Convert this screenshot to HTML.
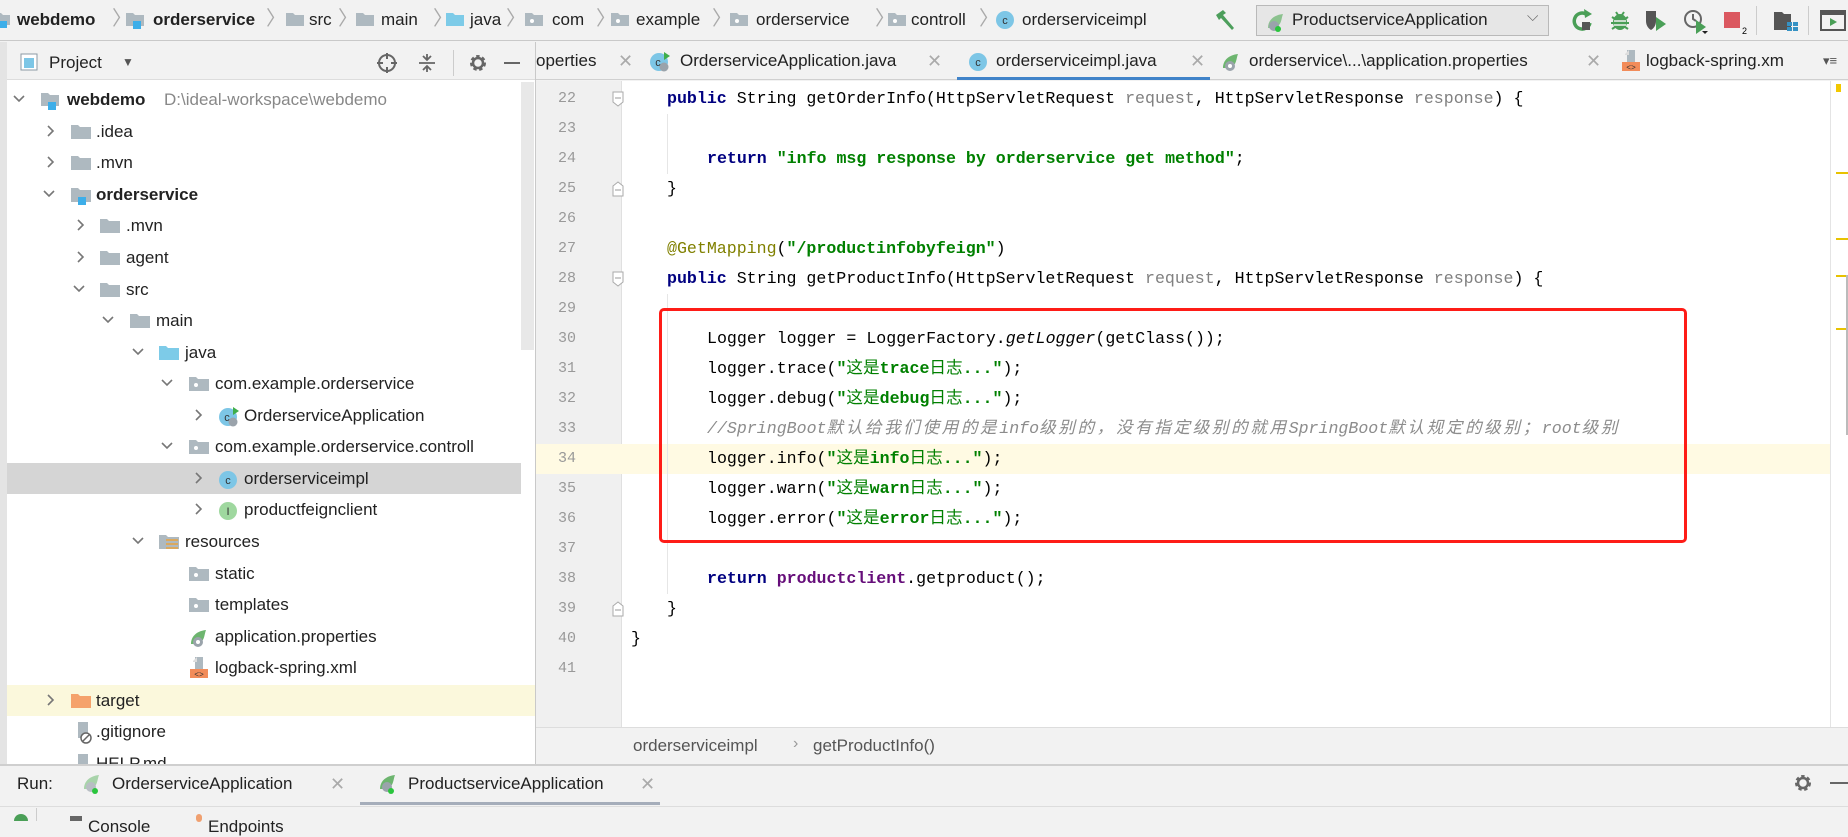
<!DOCTYPE html>
<html><head><meta charset="utf-8">
<style>
*{margin:0;padding:0;box-sizing:border-box}
body{width:1848px;height:821px;overflow:hidden;background:#f2f2f2;font-family:"Liberation Sans","Noto Sans CJK SC",sans-serif;color:#222;position:relative}
.a{position:absolute;white-space:nowrap}
.t17{font-size:17px}
.r{position:absolute;left:6px;width:514px;height:32px}
.r>*{position:absolute;top:0;line-height:32px}
.r svg{top:8px}
.code{position:absolute;font-family:"Liberation Mono","Noto Sans CJK SC",monospace;font-size:16.6px;line-height:30px;height:30px;white-space:pre;color:#000}
.ln{position:absolute;left:536px;width:40px;text-align:right;font-family:"Liberation Mono",monospace;font-size:15px;color:#999;line-height:30px;height:30px}
.kw{color:#000080;font-weight:bold}
.st{color:#008000;font-weight:bold}
.st i{font-style:normal;font-weight:normal}
.pr{color:#808080}
.an{color:#808000}
.fd{color:#660e7a;font-weight:bold}
.cm{color:#8c8c8c;font-style:italic}
.cm b{font-weight:normal;letter-spacing:2.6px}
.sep{color:#aaa;font-size:20px}
.x{color:#aaa;font-size:18px}
</style></head><body>

<!-- top nav bar -->
<div class="a" style="left:0;top:0;width:1848px;height:41px;background:#f2f2f2;border-bottom:1px solid #c9c9c9"></div>
<div class="a t17" style="top:8px;left:0;height:24px;line-height:24px">
<svg class="a" style="left:-6px;top:3px" width="18" height="18"><path d="M0 2h7l2 2h7v10H0z" fill="#aeb9c0"/><rect x="6" y="10" width="7" height="7" fill="#3daee9"/></svg>
<span class="a" style="left:17px;font-weight:bold">webdemo</span>
<span class="a sep" style="left:112px;top:-1px">〉</span>
<svg class="a" style="left:126px;top:3px" width="20" height="18"><path d="M0 2h7l2 2h9v11H0z" fill="#aeb9c0"/><rect x="7" y="10" width="8" height="8" fill="#3daee9"/></svg>
<span class="a" style="left:153px;font-weight:bold">orderservice</span>
<span class="a sep" style="left:266px;top:-1px">〉</span>
<svg class="a" style="left:286px;top:4px" width="20" height="16"><path d="M0 1h7l2 2h9v11H0z" fill="#aeb9c0"/></svg>
<span class="a" style="left:309px">src</span>
<span class="a sep" style="left:338px;top:-1px">〉</span>
<svg class="a" style="left:356px;top:4px" width="20" height="16"><path d="M0 1h7l2 2h9v11H0z" fill="#aeb9c0"/></svg>
<span class="a" style="left:381px">main</span>
<span class="a sep" style="left:433px;top:-1px">〉</span>
<svg class="a" style="left:446px;top:4px" width="20" height="16"><path d="M0 1h7l2 2h9v11H0z" fill="#7dcbe8"/></svg>
<span class="a" style="left:470px">java</span>
<span class="a sep" style="left:506px;top:-1px">〉</span>
<svg class="a" style="left:525px;top:4px" width="20" height="16"><path d="M0 1h7l2 2h9v11H0z" fill="#aeb9c0"/><circle cx="7" cy="9" r="2" fill="#fff"/></svg>
<span class="a" style="left:552px">com</span>
<span class="a sep" style="left:596px;top:-1px">〉</span>
<svg class="a" style="left:611px;top:4px" width="20" height="16"><path d="M0 1h7l2 2h9v11H0z" fill="#aeb9c0"/><circle cx="7" cy="9" r="2" fill="#fff"/></svg>
<span class="a" style="left:636px">example</span>
<span class="a sep" style="left:712px;top:-1px">〉</span>
<svg class="a" style="left:730px;top:4px" width="20" height="16"><path d="M0 1h7l2 2h9v11H0z" fill="#aeb9c0"/><circle cx="7" cy="9" r="2" fill="#fff"/></svg>
<span class="a" style="left:756px">orderservice</span>
<span class="a sep" style="left:875px;top:-1px">〉</span>
<svg class="a" style="left:888px;top:4px" width="20" height="16"><path d="M0 1h7l2 2h9v11H0z" fill="#aeb9c0"/><circle cx="7" cy="9" r="2" fill="#fff"/></svg>
<span class="a" style="left:911px">controll</span>
<span class="a sep" style="left:979px;top:-1px">〉</span>
<svg class="a" style="left:995px;top:2px" width="20" height="20"><circle cx="10" cy="10" r="9" fill="#7dc6e6"/><text x="10" y="14" font-size="11" text-anchor="middle" fill="#333" font-family="Liberation Sans">c</text></svg>
<span class="a" style="left:1022px">orderserviceimpl</span>
</div>
<!-- hammer -->
<svg class="a" style="left:1213px;top:8px" width="26" height="26"><path d="M3 7l7-5 3 3-3 2 11 13-2 2-11-12-2 2z" fill="#4d9f5c"/></svg>
<!-- run config -->
<div class="a" style="left:1256px;top:5px;width:293px;height:31px;background:#e6e6e6;border:1px solid #b9b9b9"></div>
<svg class="a" style="left:1265px;top:11px" width="22" height="22"><path d="M3 17c0-8 6-13 15-14-2 5-1 11-8 14z" fill="#8cc28f"/><circle cx="9" cy="15" r="5" fill="#9aa3ab"/><circle cx="13" cy="18" r="3" fill="#2ac53d"/></svg>
<span class="a t17" style="left:1292px;top:9px;line-height:22px">ProductserviceApplication</span>
<span class="a" style="left:1527px;top:8px;color:#666;font-size:15px">⌵</span>
<!-- toolbar icons -->
<svg class="a" style="left:1570px;top:8px" width="26" height="26"><path d="M16 6a8 8 0 1 0 4 9" stroke="#4a9f57" stroke-width="3.5" fill="none"/><path d="M14 1l8 5-7 4z" fill="#4a9f57"/><rect x="12" y="14" width="8" height="8" fill="#555"/></svg>
<svg class="a" style="left:1607px;top:8px" width="26" height="26"><ellipse cx="13" cy="14" rx="7" ry="8" fill="#4a9f57"/><path d="M5 9l3 2M21 9l-3 2M4 15h5M17 15h5M5 21l3-2M21 21l-3-2M9 4l2 3M17 4l-2 3" stroke="#4a9f57" stroke-width="2"/><path d="M7 13h12M7 17h12" stroke="#f2f2f2" stroke-width="1.5"/></svg>
<svg class="a" style="left:1643px;top:8px" width="26" height="26"><path d="M3 3h10v10c0 5-3 8-5 9-2-1-5-4-5-9z" fill="#555"/><path d="M13 9l10 7-10 7z" fill="#4a9f57"/></svg>
<svg class="a" style="left:1683px;top:8px" width="28" height="28"><circle cx="10" cy="11" r="8" stroke="#666" stroke-width="2" fill="none"/><path d="M10 6v5l3 2" stroke="#666" stroke-width="2" fill="none"/><path d="M13 12l10 7-10 7z" fill="#4a9f57"/><path d="M19 23h6l-3 3z" fill="#222"/></svg>
<svg class="a" style="left:1723px;top:10px" width="26" height="26"><rect x="1" y="2" width="16" height="16" fill="#db5860"/><text x="19" y="24" font-size="9" font-family="Liberation Sans" fill="#000">2</text></svg>
<div class="a" style="left:1756px;top:6px;width:1px;height:29px;background:#ccc"></div>
<svg class="a" style="left:1773px;top:10px" width="26" height="26"><path d="M1 2h8l2 2h7v16H1z" fill="#555"/><rect x="14" y="12" width="5" height="4" fill="#3592c4"/><rect x="20" y="12" width="5" height="4" fill="#3592c4"/><rect x="14" y="17" width="5" height="4" fill="#3592c4"/><rect x="20" y="17" width="5" height="4" fill="#3592c4"/></svg>
<div class="a" style="left:1808px;top:6px;width:1px;height:29px;background:#ccc"></div>
<svg class="a" style="left:1820px;top:9px" width="28" height="24"><rect x="1" y="2" width="24" height="19" fill="none" stroke="#555" stroke-width="2"/><rect x="1" y="2" width="24" height="4" fill="#555"/><path d="M10 9l7 4-7 4z" fill="#4a9f57"/></svg>

<!-- left panel -->
<div class="a" style="left:0;top:42px;width:7px;height:722px;background:#e4e4e4"></div>
<div class="a" style="left:7px;top:42px;width:529px;height:722px;background:#fff;border-right:1px solid #c9c9c9"></div>
<div class="a" style="left:7px;top:42px;width:528px;height:38px;background:#f2f2f2;border-bottom:1px solid #ddd"></div>
<svg class="a" style="left:20px;top:53px" width="18" height="18"><rect x="1" y="1" width="16" height="16" fill="#fff" stroke="#8c9aa4"/><rect x="4" y="5" width="10" height="10" fill="#7dc6e6"/></svg>
<span class="a t17" style="left:49px;top:52px;line-height:22px">Project</span>
<span class="a" style="left:122px;top:55px;font-size:12px;color:#555">▼</span>
<svg class="a" style="left:376px;top:52px" width="22" height="22"><circle cx="11" cy="11" r="8" stroke="#666" stroke-width="2" fill="none"/><path d="M11 1v6M11 15v6M1 11h6M15 11h6" stroke="#666" stroke-width="2"/></svg>
<svg class="a" style="left:417px;top:52px" width="20" height="22"><path d="M2 11h16M10 2v5M6 4l4 4 4-4M10 20v-5M6 18l4-4 4 4" stroke="#666" stroke-width="1.8" fill="none"/></svg>
<div class="a" style="left:453px;top:50px;width:1px;height:26px;background:#ccc"></div>
<svg class="a" style="left:467px;top:52px" width="22" height="22"><circle cx="11" cy="11" r="6" stroke="#666" stroke-width="4" fill="none" stroke-dasharray="3 2.3"/><circle cx="11" cy="11" r="5" stroke="#666" stroke-width="2.5" fill="none"/></svg>
<div class="a" style="left:504px;top:62px;width:16px;height:2px;background:#666"></div>
<!-- scrollbar -->
<div class="a" style="left:521px;top:82px;width:13px;height:268px;background:#e8e8e8"></div>

<!-- tree rows -->
<div class="a" style="left:7px;top:463px;width:514px;height:31px;background:#d5d5d5"></div>
<div class="a" style="left:7px;top:685px;width:528px;height:31px;background:#fbf8dc"></div>

<div class="t17">
<div class="r" style="top:84px"><svg style="left:6px" width="14" height="14"><path d="M2 4l5 5 5-5" stroke="#777" stroke-width="1.6" fill="none"/></svg><svg style="left:35px" width="22" height="18"><path d="M0 1h7l2 2h9v11H0z" fill="#aeb9c0"/><rect x="7" y="10" width="8" height="8" fill="#3daee9"/></svg><span style="left:61px;font-weight:bold">webdemo</span><span style="left:158px;color:#888">D:\ideal-workspace\webdemo</span></div>
<div class="r" style="top:116px"><svg style="left:38px" width="14" height="14"><path d="M4 2l5 5-5 5" stroke="#777" stroke-width="1.6" fill="none"/></svg><svg style="left:65px" width="22" height="18"><path d="M0 1h7l2 2h11v12H0z" fill="#aeb9c0"/></svg><span style="left:90px">.idea</span></div>
<div class="r" style="top:147px"><svg style="left:38px" width="14" height="14"><path d="M4 2l5 5-5 5" stroke="#777" stroke-width="1.6" fill="none"/></svg><svg style="left:65px" width="22" height="18"><path d="M0 1h7l2 2h11v12H0z" fill="#aeb9c0"/></svg><span style="left:90px">.mvn</span></div>
<div class="r" style="top:179px"><svg style="left:36px" width="14" height="14"><path d="M2 4l5 5 5-5" stroke="#777" stroke-width="1.6" fill="none"/></svg><svg style="left:65px" width="22" height="18"><path d="M0 1h7l2 2h11v12H0z" fill="#aeb9c0"/><rect x="7" y="10" width="8" height="8" fill="#3daee9"/></svg><span style="left:90px;font-weight:bold">orderservice</span></div>
<div class="r" style="top:210px"><svg style="left:68px" width="14" height="14"><path d="M4 2l5 5-5 5" stroke="#777" stroke-width="1.6" fill="none"/></svg><svg style="left:94px" width="22" height="18"><path d="M0 1h7l2 2h11v12H0z" fill="#aeb9c0"/></svg><span style="left:120px">.mvn</span></div>
<div class="r" style="top:242px"><svg style="left:68px" width="14" height="14"><path d="M4 2l5 5-5 5" stroke="#777" stroke-width="1.6" fill="none"/></svg><svg style="left:94px" width="22" height="18"><path d="M0 1h7l2 2h11v12H0z" fill="#aeb9c0"/></svg><span style="left:120px">agent</span></div>
<div class="r" style="top:274px"><svg style="left:66px" width="14" height="14"><path d="M2 4l5 5 5-5" stroke="#777" stroke-width="1.6" fill="none"/></svg><svg style="left:94px" width="22" height="18"><path d="M0 1h7l2 2h11v12H0z" fill="#aeb9c0"/></svg><span style="left:120px">src</span></div>
<div class="r" style="top:305px"><svg style="left:95px" width="14" height="14"><path d="M2 4l5 5 5-5" stroke="#777" stroke-width="1.6" fill="none"/></svg><svg style="left:124px" width="22" height="18"><path d="M0 1h7l2 2h11v12H0z" fill="#aeb9c0"/></svg><span style="left:150px">main</span></div>
<div class="r" style="top:337px"><svg style="left:125px" width="14" height="14"><path d="M2 4l5 5 5-5" stroke="#777" stroke-width="1.6" fill="none"/></svg><svg style="left:153px" width="22" height="18"><path d="M0 1h7l2 2h11v12H0z" fill="#7dcbe8"/></svg><span style="left:179px">java</span></div>
<div class="r" style="top:368px"><svg style="left:154px" width="14" height="14"><path d="M2 4l5 5 5-5" stroke="#777" stroke-width="1.6" fill="none"/></svg><svg style="left:183px" width="22" height="18"><path d="M0 1h7l2 2h11v12H0z" fill="#aeb9c0"/><circle cx="7" cy="9" r="2" fill="#fff"/></svg><span style="left:209px">com.example.orderservice</span></div>
<div class="r" style="top:400px"><svg style="left:186px" width="14" height="14"><path d="M4 2l5 5-5 5" stroke="#777" stroke-width="1.6" fill="none"/></svg><svg style="left:212px;top:6px" width="24" height="22"><circle cx="10" cy="11" r="9" fill="#7dc6e6"/><text x="9" y="15" font-size="11" text-anchor="middle" fill="#333" font-family="Liberation Sans">c</text><path d="M15 1l6 4-6 4z" fill="#3fae4a"/><circle cx="15" cy="16" r="4.5" fill="#9aa3ab"/></svg><span style="left:238px">OrderserviceApplication</span></div>
<div class="r" style="top:431px"><svg style="left:154px" width="14" height="14"><path d="M2 4l5 5 5-5" stroke="#777" stroke-width="1.6" fill="none"/></svg><svg style="left:183px" width="22" height="18"><path d="M0 1h7l2 2h11v12H0z" fill="#aeb9c0"/><circle cx="7" cy="9" r="2" fill="#fff"/></svg><span style="left:209px">com.example.orderservice.controll</span></div>
<div class="r" style="top:463px"><svg style="left:186px" width="14" height="14"><path d="M4 2l5 5-5 5" stroke="#777" stroke-width="1.6" fill="none"/></svg><svg style="left:212px;top:6px" width="22" height="22"><circle cx="10" cy="11" r="9" fill="#7dc6e6"/><text x="10" y="15" font-size="11" text-anchor="middle" fill="#333" font-family="Liberation Sans">c</text></svg><span style="left:238px">orderserviceimpl</span></div>
<div class="r" style="top:494px"><svg style="left:186px" width="14" height="14"><path d="M4 2l5 5-5 5" stroke="#777" stroke-width="1.6" fill="none"/></svg><svg style="left:212px;top:6px" width="22" height="22"><circle cx="10" cy="11" r="9" fill="#9fd89f"/><text x="10" y="15" font-size="11" text-anchor="middle" fill="#333" font-family="Liberation Sans">I</text></svg><span style="left:238px">productfeignclient</span></div>
<div class="r" style="top:526px"><svg style="left:125px" width="14" height="14"><path d="M2 4l5 5 5-5" stroke="#777" stroke-width="1.6" fill="none"/></svg><svg style="left:153px" width="22" height="18"><path d="M0 1h7l2 2h11v12H0z" fill="#aeb9c0"/><path d="M7 6h12M7 10h12M7 14h12" stroke="#e8a33d" stroke-width="1.5"/></svg><span style="left:179px">resources</span></div>
<div class="r" style="top:558px"><svg style="left:183px" width="22" height="18"><path d="M0 1h7l2 2h11v12H0z" fill="#aeb9c0"/><circle cx="7" cy="9" r="2" fill="#fff"/></svg><span style="left:209px">static</span></div>
<div class="r" style="top:589px"><svg style="left:183px" width="22" height="18"><path d="M0 1h7l2 2h11v12H0z" fill="#aeb9c0"/><circle cx="7" cy="9" r="2" fill="#fff"/></svg><span style="left:209px">templates</span></div>
<div class="r" style="top:621px"><svg style="left:183px;top:6px" width="22" height="22"><path d="M2 17c0-8 6-13 15-14-2 5-1 11-8 14z" fill="#6db56f"/><circle cx="9" cy="15" r="5" fill="#9aa3ab"/><circle cx="9" cy="15" r="2" fill="#fff"/></svg><span style="left:209px">application.properties</span></div>
<div class="r" style="top:652px"><svg style="left:183px;top:4px" width="22" height="24"><path d="M6 1h8v12H6z" fill="#aeb9c0"/><path d="M4 5l4-4v5H4z" fill="#ddd"/><rect x="1" y="13" width="18" height="9" fill="#f28c5a"/><text x="10" y="21" font-size="8" text-anchor="middle" fill="#333" font-family="Liberation Mono">&lt;&gt;</text></svg><span style="left:209px">logback-spring.xml</span></div>
<div class="r" style="top:685px"><svg style="left:38px" width="14" height="14"><path d="M4 2l5 5-5 5" stroke="#777" stroke-width="1.6" fill="none"/></svg><svg style="left:65px" width="22" height="18"><path d="M0 1h7l2 2h11v12H0z" fill="#f5a26b"/></svg><span style="left:90px">target</span></div>
<div class="r" style="top:716px"><svg style="left:68px;top:5px" width="20" height="24"><path d="M4 1h10v16H4z" fill="#aeb9c0"/><circle cx="12" cy="17" r="5" fill="#fff" stroke="#666" stroke-width="1.5"/><path d="M9 20l6-6" stroke="#666" stroke-width="1.5"/></svg><span style="left:90px">.gitignore</span></div>
<div class="r" style="top:748px;height:16px;overflow:hidden"><svg style="left:68px;top:5px" width="20" height="24"><path d="M4 1h10v18H4z" fill="#aeb9c0"/></svg><span style="left:90px">HELP.md</span></div>
</div>

<!-- editor tabs -->
<div class="a" style="left:536px;top:42px;width:1312px;height:38px;background:#f2f2f2;border-bottom:1px solid #d0d0d0"></div>
<div class="a t17" style="left:536px;top:42px;width:1312px;height:38px;line-height:38px;overflow:hidden">
<span class="a" style="left:0">operties</span><span class="a x" style="left:82px">✕</span>
<svg class="a" style="left:113px;top:9px" width="22" height="22"><circle cx="10" cy="11" r="9" fill="#7dc6e6"/><text x="9" y="15" font-size="11" text-anchor="middle" fill="#333" font-family="Liberation Sans">c</text><path d="M15 1l6 4-6 4z" fill="#3fae4a"/><circle cx="15" cy="16" r="4.5" fill="#9aa3ab"/></svg>
<span class="a" style="left:144px">OrderserviceApplication.java</span><span class="a x" style="left:391px">✕</span>
<div class="a" style="left:421px;top:35px;width:253px;height:3px;background:#4083c9"></div>
<svg class="a" style="left:432px;top:9px" width="22" height="22"><circle cx="10" cy="11" r="9" fill="#7dc6e6"/><text x="10" y="15" font-size="11" text-anchor="middle" fill="#333" font-family="Liberation Sans">c</text></svg>
<span class="a" style="left:460px">orderserviceimpl.java</span><span class="a x" style="left:654px">✕</span>
<svg class="a" style="left:685px;top:9px" width="22" height="22"><path d="M2 17c0-8 6-13 15-14-2 5-1 11-8 14z" fill="#6db56f"/><circle cx="9" cy="15" r="5" fill="#9aa3ab"/><circle cx="9" cy="15" r="2" fill="#fff"/></svg>
<span class="a" style="left:713px">orderservice\...\application.properties</span><span class="a x" style="left:1050px">✕</span>
<svg class="a" style="left:1085px;top:7px" width="22" height="24"><path d="M6 1h8v12H6z" fill="#aeb9c0"/><path d="M4 5l4-4v5H4z" fill="#ddd"/><rect x="1" y="13" width="18" height="9" fill="#f28c5a"/><text x="10" y="21" font-size="8" text-anchor="middle" fill="#333" font-family="Liberation Mono">&lt;&gt;</text></svg>
<span class="a" style="left:1110px">logback-spring.xm</span>
<span class="a" style="left:1287px;font-size:13px;color:#555">▾≡</span>
</div>

<!-- editor -->
<div class="a" style="left:536px;top:81px;width:1312px;height:646px;background:#fff"></div>
<div class="a" style="left:536px;top:81px;width:86px;height:646px;background:#f0f0f0;border-right:1px solid #e0e0e0"></div>
<div class="a" style="left:536px;top:444px;width:1295px;height:30px;background:#fffae3"></div>
<div class="a" style="left:1830px;top:81px;width:1px;height:646px;background:#e4e4e4"></div>
<div class="a" style="left:1836px;top:84px;width:5px;height:8px;background:#f2c800"></div>
<div class="a" style="left:1836px;top:172px;width:12px;height:2px;background:#e8c200"></div>
<div class="a" style="left:1836px;top:238px;width:12px;height:2px;background:#e8c200"></div>
<div class="a" style="left:1836px;top:275px;width:12px;height:2px;background:#e8c200"></div>
<div class="a" style="left:1836px;top:328px;width:12px;height:2px;background:#e8c200"></div>
<div class="a" style="left:1846px;top:275px;width:2px;height:160px;background:#bbb"></div>

<!-- fold markers -->
<svg class="a" style="left:612px;top:91px" width="12" height="16"><path d="M1 1h10v10l-5 4-5-4z" fill="#fff" stroke="#aaa"/><path d="M3 7h6" stroke="#999"/></svg>
<svg class="a" style="left:612px;top:181px" width="12" height="16"><path d="M1 15h10V5L6 1 1 5z" fill="#fff" stroke="#aaa"/><path d="M3 9h6" stroke="#999"/></svg>
<svg class="a" style="left:612px;top:271px" width="12" height="16"><path d="M1 1h10v10l-5 4-5-4z" fill="#fff" stroke="#aaa"/><path d="M3 7h6" stroke="#999"/></svg>
<svg class="a" style="left:612px;top:601px" width="12" height="16"><path d="M1 15h10V5L6 1 1 5z" fill="#fff" stroke="#aaa"/><path d="M3 9h6" stroke="#999"/></svg>
<div class="a" style="left:667px;top:114px;width:1px;height:60px;background:#e6e6e6"></div>
<div class="a" style="left:667px;top:294px;width:1px;height:300px;background:#e6e6e6"></div>

<div class="ln" style="top:84px">22</div><div class="ln" style="top:114px">23</div><div class="ln" style="top:144px">24</div><div class="ln" style="top:174px">25</div><div class="ln" style="top:204px">26</div><div class="ln" style="top:234px">27</div><div class="ln" style="top:264px">28</div><div class="ln" style="top:294px">29</div><div class="ln" style="top:324px">30</div><div class="ln" style="top:354px">31</div><div class="ln" style="top:384px">32</div><div class="ln" style="top:414px">33</div><div class="ln" style="top:444px">34</div><div class="ln" style="top:474px">35</div><div class="ln" style="top:504px">36</div><div class="ln" style="top:534px">37</div><div class="ln" style="top:564px">38</div><div class="ln" style="top:594px">39</div><div class="ln" style="top:624px">40</div><div class="ln" style="top:654px">41</div>

<div class="code" style="left:667px;top:84px"><span class="kw">public</span> String getOrderInfo(HttpServletRequest <span class="pr">request</span>, HttpServletResponse <span class="pr">response</span>) {</div>
<div class="code" style="left:707px;top:144px"><span class="kw">return</span> <span class="st">"info msg response by orderservice get method"</span>;</div>
<div class="code" style="left:667px;top:174px">}</div>
<div class="code" style="left:667px;top:234px"><span class="an">@GetMapping</span>(<span class="st">"/productinfobyfeign"</span>)</div>
<div class="code" style="left:667px;top:264px"><span class="kw">public</span> String getProductInfo(HttpServletRequest <span class="pr">request</span>, HttpServletResponse <span class="pr">response</span>) {</div>
<div class="code" style="left:707px;top:324px">Logger logger = LoggerFactory.<i>getLogger</i>(getClass());</div>
<div class="code" style="left:707px;top:354px">logger.trace(<span class="st">"<i>这是</i>trace<i>日志</i>..."</span>);</div>
<div class="code" style="left:707px;top:384px">logger.debug(<span class="st">"<i>这是</i>debug<i>日志</i>..."</span>);</div>
<div class="code cm" style="left:707px;top:414px">//SpringBoot<b>默认给我们使用的是</b>info<b>级别的，没有指定级别的就用</b>SpringBoot<b>默认规定的级别；</b>root<b>级别</b></div>
<div class="code" style="left:707px;top:444px">logger.info(<span class="st">"<i>这是</i>info<i>日志</i>..."</span>);</div>
<div class="code" style="left:707px;top:474px">logger.warn(<span class="st">"<i>这是</i>warn<i>日志</i>..."</span>);</div>
<div class="code" style="left:707px;top:504px">logger.error(<span class="st">"<i>这是</i>error<i>日志</i>..."</span>);</div>
<div class="code" style="left:707px;top:564px"><span class="kw">return</span> <span class="fd">productclient</span>.getproduct();</div>
<div class="code" style="left:667px;top:594px">}</div>
<div class="code" style="left:631px;top:624px">}</div>

<!-- red box -->
<div class="a" style="left:659px;top:308px;width:1028px;height:235px;border:3px solid #fe1c17;border-radius:5px"></div>

<!-- editor breadcrumb -->
<div class="a" style="left:536px;top:727px;width:1312px;height:37px;background:#f2f2f2;border-top:1px solid #ddd"></div>
<span class="a t17" style="left:633px;top:734px;line-height:24px;color:#555">orderserviceimpl</span>
<span class="a" style="left:793px;top:735px;color:#999;font-size:16px">›</span>
<span class="a t17" style="left:813px;top:734px;line-height:24px;color:#555">getProductInfo()</span>

<!-- run panel -->
<div class="a" style="left:0;top:764px;width:1848px;height:57px;background:#f2f2f2;border-top:2px solid #cfcfcf"></div>
<span class="a t17" style="left:17px;top:772px;line-height:24px">Run:</span>
<svg class="a" style="left:82px;top:772px" width="22" height="24"><path d="M2 17c0-8 6-13 15-14-2 5-1 11-8 14z" fill="#a8d3aa"/><circle cx="9" cy="15" r="5" fill="#b8bec4"/><circle cx="13" cy="19" r="3" fill="#2ac53d"/></svg>
<span class="a t17" style="left:112px;top:772px;line-height:24px">OrderserviceApplication</span>
<span class="a x" style="left:330px;top:772px;line-height:24px">✕</span>
<svg class="a" style="left:378px;top:772px" width="22" height="24"><path d="M2 17c0-8 6-13 15-14-2 5-1 11-8 14z" fill="#6db56f"/><circle cx="9" cy="15" r="5" fill="#9aa3ab"/><circle cx="13" cy="19" r="3" fill="#2ac53d"/></svg>
<span class="a t17" style="left:408px;top:772px;line-height:24px">ProductserviceApplication</span>
<span class="a x" style="left:640px;top:772px;line-height:24px">✕</span>
<div class="a" style="left:360px;top:802px;width:300px;height:3px;background:#a5adba"></div>
<svg class="a" style="left:1792px;top:772px" width="22" height="22"><circle cx="11" cy="11" r="6" stroke="#666" stroke-width="4" fill="none" stroke-dasharray="3 2.3"/><circle cx="11" cy="11" r="5" stroke="#666" stroke-width="2.5" fill="none"/></svg>
<div class="a" style="left:1830px;top:782px;width:18px;height:2px;background:#666"></div>
<div class="a" style="left:0;top:806px;width:1848px;height:1px;background:#ddd"></div>
<div class="a" style="left:36px;top:808px;width:1px;height:13px;background:#ccc"></div>
<div class="a" style="left:14px;top:814px;width:14px;height:7px;background:#4a9f57;border-radius:7px 7px 0 0"></div>
<div class="a" style="left:70px;top:816px;width:12px;height:5px;background:#666"></div>
<span class="a" style="left:88px;top:817px;font-size:17px;line-height:20px">Console</span>
<div class="a" style="left:196px;top:814px;width:6px;height:8px;background:#f0a070;border-radius:3px"></div>
<span class="a" style="left:208px;top:817px;font-size:17px;line-height:20px">Endpoints</span>
</body></html>
